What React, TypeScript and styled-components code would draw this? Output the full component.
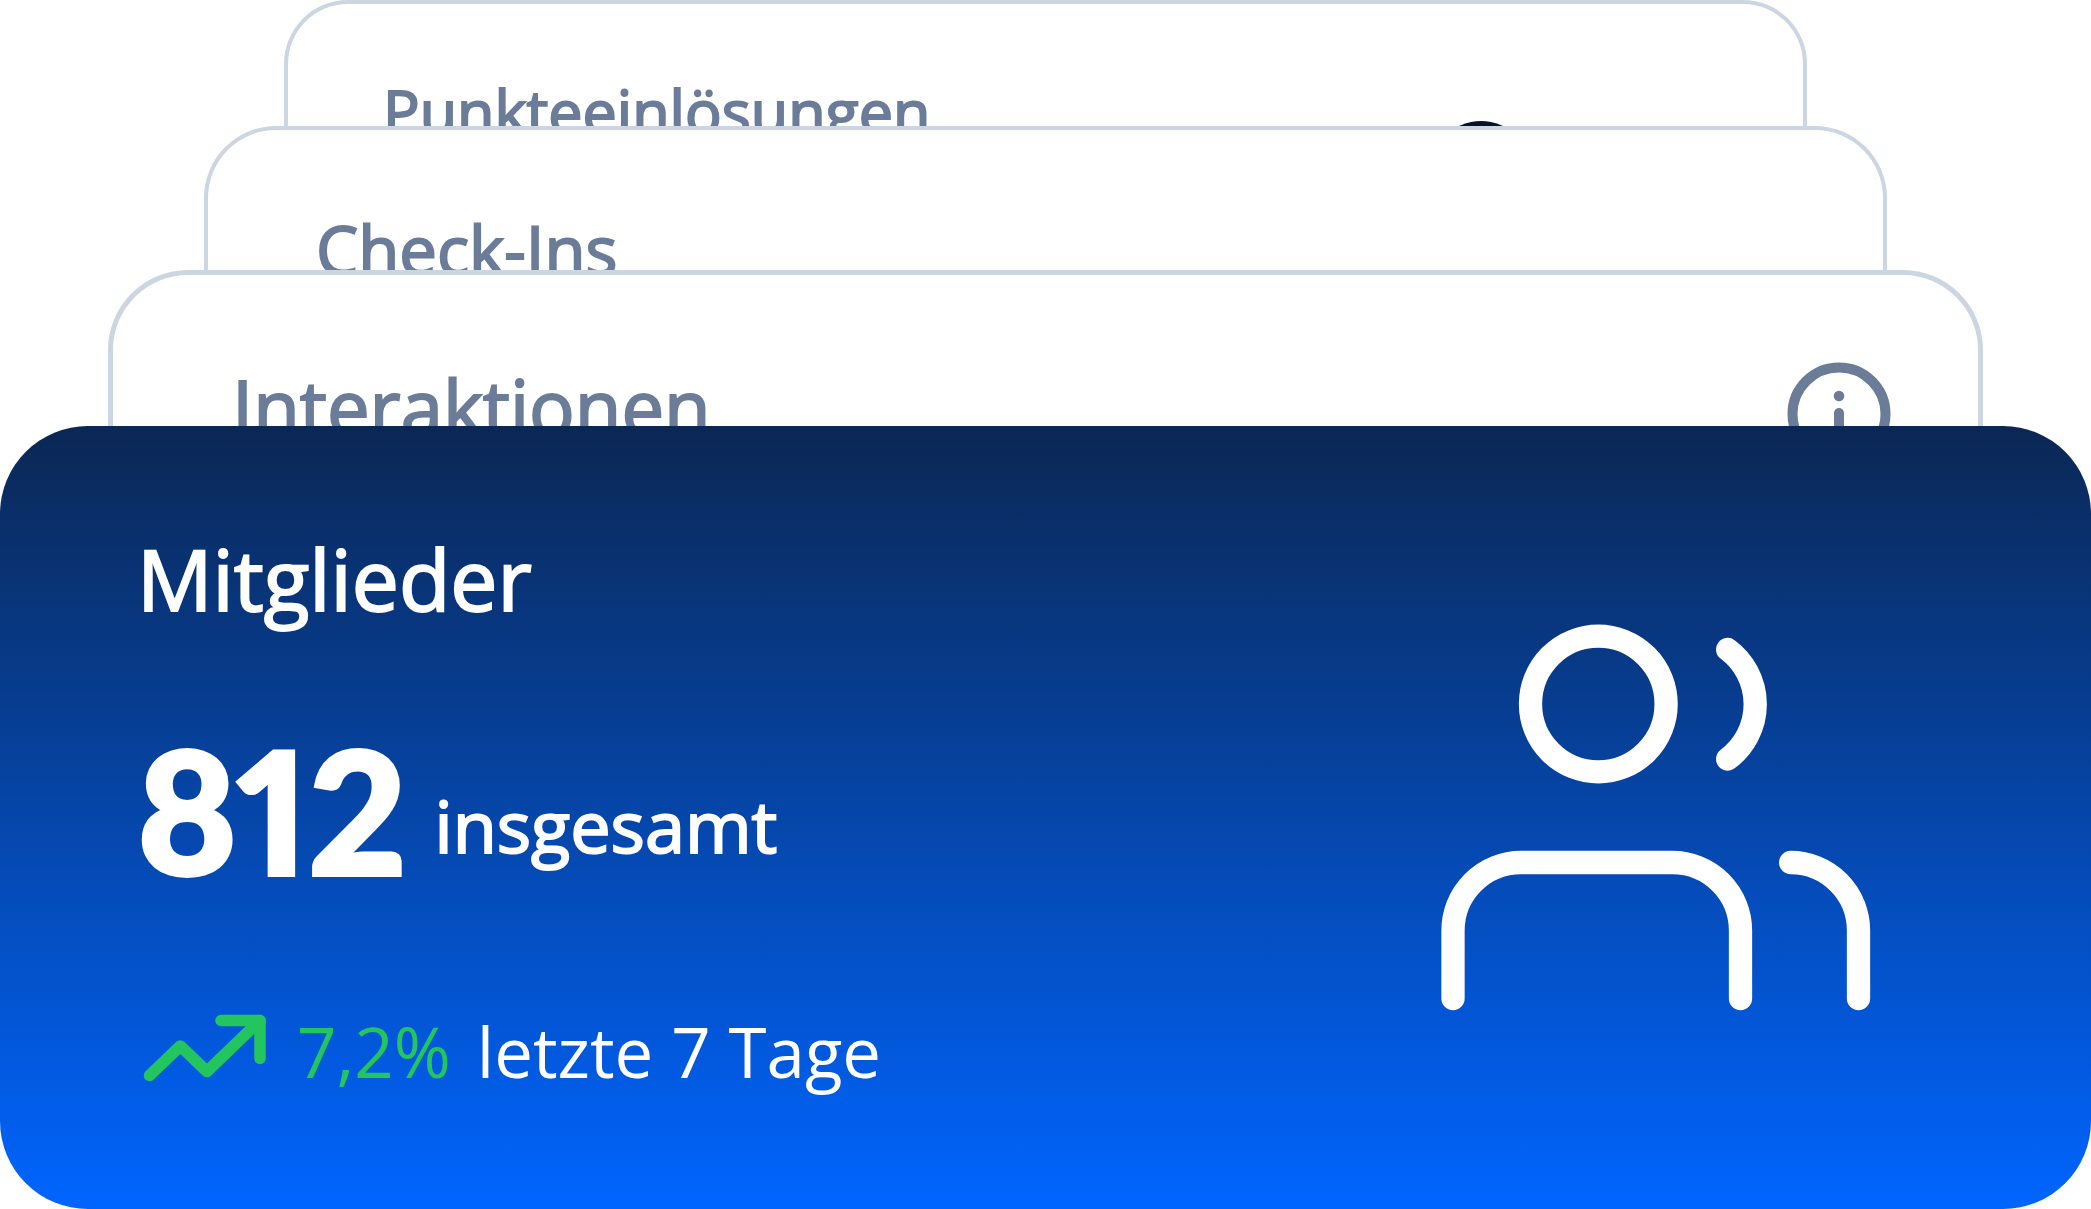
import React from "react";
import styled, { createGlobalStyle } from "styled-components";

const GlobalStyle = createGlobalStyle`
  *, *::before, *::after {
    box-sizing: border-box;
  }
  body {
    margin: 0;
    background: #ffffff;
    color: #ffffff;
    font-family: "Open Sans", "Noto Sans", sans-serif;
  }
  h2, p {
    margin: 0;
  }
`;

const Stack = styled.main`
  display: flex;
  flex-direction: column;
`;

/* A card of which only the upper part looks out behind the next one. */
const BackCard = styled.section<{
  $inset: number;
  $peek: number;
  $radius: number;
  $border: number;
}>`
  height: ${(p) => p.$peek}px;
  margin: 0 ${(p) => p.$inset}px;
  overflow: hidden;
  border: ${(p) => p.$border}px solid #cbd6e2;
  border-bottom: 0;
  border-radius: ${(p) => p.$radius}px ${(p) => p.$radius}px 0 0;
  background: #ffffff;
  color: #6b7c99;
`;

const CardHeader = styled.header<{ $top: number; $left: number; $right: number }>`
  display: flex;
  align-items: flex-start;
  justify-content: space-between;
  padding: ${(p) => p.$top}px ${(p) => p.$right}px 0 ${(p) => p.$left}px;
`;

/* The stroke brings the regular cut up to a medium weight. */
const Title = styled.h2<{ $size: number; $line: number }>`
  font-size: ${(p) => p.$size}px;
  line-height: ${(p) => p.$line}px;
  font-weight: 400;
  white-space: nowrap;
  -webkit-text-stroke: 2px currentColor;
`;

const Icon = styled.svg`
  display: block;
  flex: none;
  fill: none;
  stroke: currentColor;
  stroke-linecap: round;
  stroke-linejoin: round;
`;

const Mark = styled(Icon)`
  margin-top: 46px;
  fill: #061229;
  stroke: none;
`;

const MainCard = styled.section`
  display: flex;
  align-items: center;
  justify-content: space-between;
  padding: 103px 220px 112px 137px;
  border-radius: 88px;
  background: linear-gradient(180deg, #0b2754 0%, #0065ff 100%);
`;

const Figures = styled.div`
  display: flex;
  flex-direction: column;
`;

const ValueRow = styled.p`
  display: flex;
  align-items: flex-end;
  gap: 28px;
  margin: 92px 0 108px;
`;

const Value = styled.strong`
  font-family: Lato, "Open Sans", sans-serif;
  font-size: 170px;
  line-height: 176px;
  font-weight: 900;
  font-variant-numeric: proportional-nums lining-nums;
  -webkit-text-stroke: 4px currentColor;
`;

const Unit = styled.span`
  margin-bottom: 24px;
  font-size: 72px;
  line-height: 96px;
  -webkit-text-stroke: 2px currentColor;
`;

const TrendRow = styled.p`
  display: flex;
  align-items: center;
  gap: 26px;
  font-size: 69px;
  line-height: 92px;
  white-space: nowrap;
`;

const TrendIcon = styled(Icon)`
  color: #22c55e;
`;

const Change = styled.span`
  color: #22c55e;
`;

const MembersIcon = styled(Icon)`
  margin-top: 9px;
`;

export default function App() {
  return (
    <>
      <GlobalStyle />
      <Stack>
        <BackCard $inset={284} $peek={126} $radius={64} $border={4}>
          <CardHeader $top={71} $left={95} $right={271}>
            <Title $size={61} $line={72}>Punkteeinlösungen</Title>
            <Mark width="102" height="102" viewBox="0 0 102 102" aria-hidden="true">
              <circle cx="51" cy="51" r="51" />
            </Mark>
          </CardHeader>
        </BackCard>

        <BackCard $inset={204} $peek={144} $radius={72} $border={4}>
          <CardHeader $top={79} $left={108} $right={88}>
            <Title $size={67} $line={80}>Check-Ins</Title>
          </CardHeader>
        </BackCard>

        <BackCard $inset={108} $peek={156} $radius={80} $border={5}>
          <CardHeader $top={87} $left={119} $right={87}>
            <Title $size={76} $line={90}>Interaktionen</Title>
            <Icon width="104" height="104" viewBox="0 0 104 104" aria-hidden="true">
              <circle cx="52" cy="52" r="46.5" strokeWidth="10" />
              <path d="M52 51v22" strokeWidth="10" />
              <circle cx="52" cy="34" r="5.3" fill="currentColor" stroke="none" />
            </Icon>
          </CardHeader>
        </BackCard>

        <MainCard>
          <Figures>
            <Title $size={84} $line={100}>Mitglieder</Title>
            <ValueRow>
              <Value>812</Value>
              <Unit>insgesamt</Unit>
            </ValueRow>
            <TrendRow>
              <TrendIcon width="134" height="92" viewBox="2 0 134 92" strokeWidth="11.5" aria-hidden="true">
                <path d="M14.500 70.500L45.300 41L72 66.500L125 15.500" />
                <path d="M86 15.500H125V53.500" />
              </TrendIcon>
              <Change>7,2%</Change>
              <span>letzte 7 Tage</span>
            </TrendRow>
          </Figures>
          <MembersIcon width="430" height="387" viewBox="41 44 430 387" strokeWidth="23.3" aria-hidden="true">
            <circle cx="198.300" cy="124" r="67.800" />
            <path d="M327.700 69.500A68.200 68.200 0 0 1 327.700 179" />
            <path d="M53 418.500V350.500A68 68 0 0 1 121 282.500H272.500A68 68 0 0 1 340.500 350.500V418.500" />
            <path d="M390.700 282.500A68 68 0 0 1 458.500 350.500V418.500" />
          </MembersIcon>
        </MainCard>
      </Stack>
    </>
  );
}
